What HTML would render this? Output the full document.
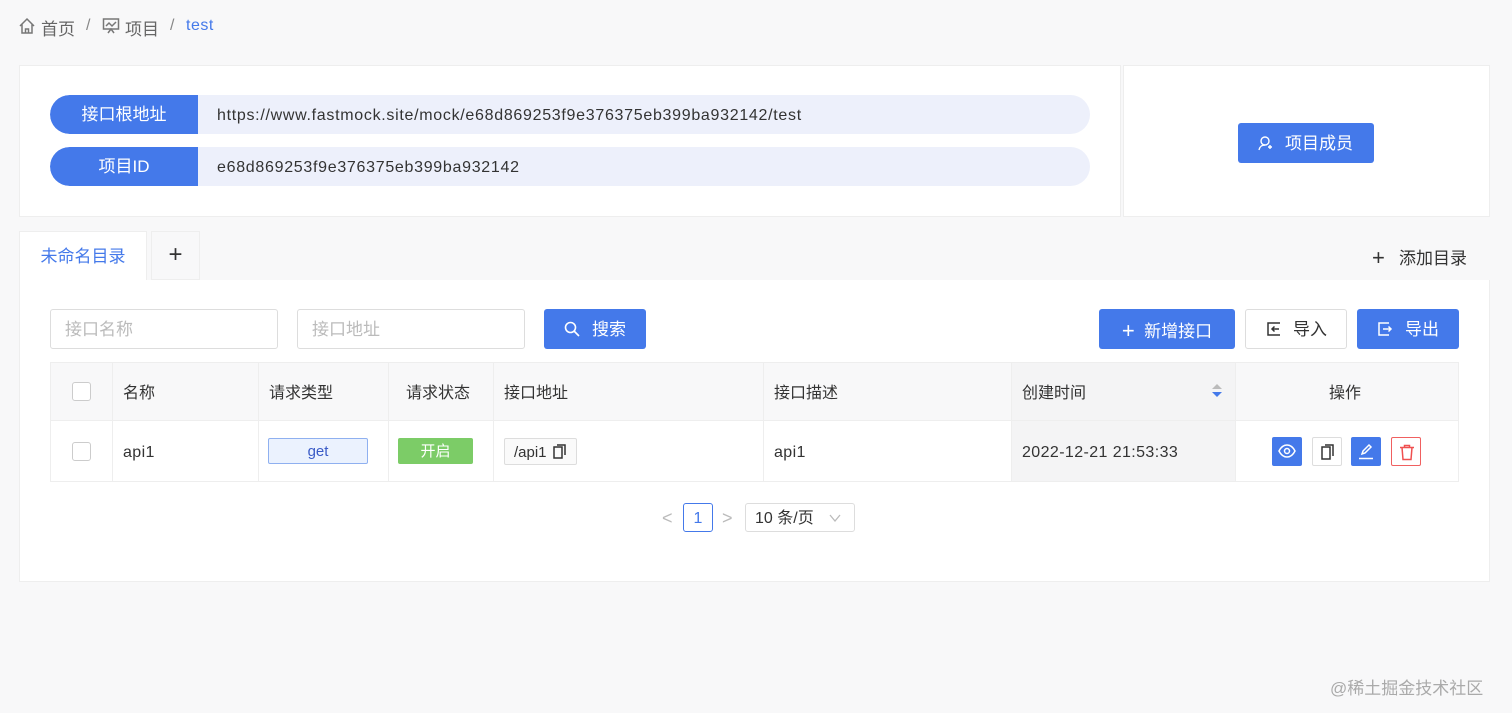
<!DOCTYPE html>
<html><head><meta charset="utf-8"><style>
*{box-sizing:border-box;margin:0;padding:0}
body{width:1512px;height:713px;background:#f8f8f9;font-family:"Liberation Sans","Noto Sans CJK SC",sans-serif;color:#333;position:relative;overflow:hidden;font-size:16px}
.a{position:absolute}
.card{background:#fff;border:1px solid #eee}
.pill{position:absolute;left:50px;width:1040px;height:39px;border-radius:20px;background:#edf0fb;overflow:hidden}
.pill .l{position:absolute;left:0;top:0;width:148px;height:39px;background:#4479ea;color:#fff;text-align:center;line-height:39px;font-size:17px;border-radius:20px 0 0 20px}
.pill .v{position:absolute;left:217px;top:1px;line-height:39px;font-size:16px;color:#333;letter-spacing:.7px}
.btn{position:absolute;height:40px;border-radius:3px;line-height:40px;text-align:center;font-size:17px}
.bl{background:#4479ea;color:#fff}
.wh{background:#fff;border:1px solid #ddd;color:#333;line-height:38px}
.inp{position:absolute;top:309px;height:40px;width:228px;border:1px solid #ddd;border-radius:3px;background:#fff;color:#bbb;font-size:17px;line-height:40px;padding-left:14px}
.th{position:absolute;top:364px;height:59px;line-height:59px;font-size:16px;color:#333}
.td{position:absolute;top:423px;height:60px;line-height:60px;font-size:16px;color:#333;letter-spacing:.4px}
.vl{position:absolute;width:1px;background:#eee}
.cb{position:absolute;left:72px;width:19px;height:19px;border:1px solid #ccc;border-radius:3px;background:#fff}
.ib{position:absolute;top:437px;width:30px;height:29px;border-radius:2px}
</style></head><body>
<svg class="a" style="left:18px;top:17px" width="18" height="18" viewBox="0 0 18 18" fill="none" stroke="#777" stroke-width="1.5"><path d="M2 9L9 2l7 7M4 7.5V16h10V7.5M7.5 16v-4h3v4"/></svg>
<div class="a" style="left:41px;top:15px;font-size:17px;color:#666">首页</div>
<div class="a" style="left:86px;top:17px;font-size:16px;color:#888">/</div>
<svg class="a" style="left:102px;top:17px" width="18" height="18" viewBox="0 0 18 18" fill="none" stroke="#777" stroke-width="1.5"><rect x="1.5" y="2" width="15" height="10"/><path d="M4 9l3-3 3 3 4-4M6 16l3-4 3 4"/></svg>
<div class="a" style="left:125px;top:15px;font-size:17px;color:#666">项目</div>
<div class="a" style="left:170px;top:17px;font-size:16px;color:#888">/</div>
<div class="a" style="left:186px;top:17px;font-size:16px;color:#4479ea;letter-spacing:.5px">test</div>

<div class="a card" style="left:19px;top:65px;width:1102px;height:152px"></div>
<div class="a card" style="left:1123px;top:65px;width:367px;height:152px"></div>
<div class="pill" style="top:95px"><div class="l">接口根地址</div><div class="v" style="left:167px">https://www.fastmock.site/mock/e68d869253f9e376375eb399ba932142/test</div></div>
<div class="pill" style="top:147px"><div class="l">项目ID</div><div class="v" style="left:167px">e68d869253f9e376375eb399ba932142</div></div>
<div class="btn bl" style="left:1238px;top:123px;width:136px;line-height:41px">
<svg style="position:absolute;left:19px;top:12px" width="17" height="17" viewBox="0 0 17 17" fill="none" stroke="#fff" stroke-width="1.4"><circle cx="8" cy="6" r="4"/><path d="M2 15c1-4 3-5 6-5M11 12h4M13 10v4"/></svg>
<span style="margin-left:26px">项目成员</span></div>

<div class="a" style="left:19px;top:231px;width:128px;height:51px;background:#fff;border:1px solid #eee;border-bottom:none;color:#4479ea;font-size:17px;line-height:49px;text-align:center">未命名目录</div>
<div class="a" style="left:151px;top:231px;width:49px;height:49px;background:#f8f8f9;border:1px solid #eee;font-size:24px;line-height:46px;text-align:center;color:#333">+</div>
<div class="a" style="left:1372px;top:244px;font-size:17px;color:#333"><span style="font-size:22px;position:relative;top:1px">+</span>&nbsp;&nbsp; 添加目录</div>

<div class="a" style="left:19px;top:280px;width:1471px;height:302px;background:#fff;border:1px solid #eee;border-top:none"></div>
<div class="inp" style="left:50px">接口名称</div>
<div class="inp" style="left:297px">接口地址</div>
<div class="btn bl" style="left:544px;top:309px;width:102px;line-height:42px">
<svg style="position:absolute;left:20px;top:12px" width="16" height="16" viewBox="0 0 16 16" fill="none" stroke="#fff" stroke-width="1.6"><circle cx="6.5" cy="6.5" r="5"/><path d="M10 10l5 5"/></svg><span style="margin-left:28px">搜索</span></div>
<div class="btn bl" style="left:1099px;top:309px;width:136px;line-height:42px"><span style="font-size:22px;position:relative;top:1px">+</span>&nbsp; 新增接口</div>
<div class="btn wh" style="left:1245px;top:309px;width:102px;line-height:40px">
<svg style="position:absolute;left:20px;top:11px" width="16" height="16" viewBox="0 0 16 16" fill="none" stroke="#333" stroke-width="1.5"><path d="M14 2H2v12h12M6 8h7M8.5 5.5L6 8l2.5 2.5"/></svg><span style="margin-left:28px">导入</span></div>
<div class="btn bl" style="left:1357px;top:309px;width:102px;line-height:42px">
<svg style="position:absolute;left:20px;top:12px" width="16" height="16" viewBox="0 0 16 16" fill="none" stroke="#fff" stroke-width="1.5"><path d="M12 2H2v12h10M6 8h8M11.5 5.5L14 8l-2.5 2.5"/></svg><span style="margin-left:28px">导出</span></div>

<div class="a" style="left:50px;top:362px;width:1409px;height:120px;border:1px solid #eee;background:#fff"></div>
<div class="a" style="left:51px;top:363px;width:1407px;height:58px;background:#f8f8f9"></div>
<div class="a" style="left:1011px;top:363px;width:224px;height:118px;background:#f4f4f5"></div>
<div class="a" style="left:51px;top:420px;width:1407px;height:1px;background:#eee"></div>
<div class="vl" style="left:112px;top:363px;height:118px"></div>
<div class="vl" style="left:258px;top:363px;height:118px"></div>
<div class="vl" style="left:388px;top:363px;height:118px"></div>
<div class="vl" style="left:493px;top:363px;height:118px"></div>
<div class="vl" style="left:763px;top:363px;height:118px"></div>
<div class="vl" style="left:1011px;top:363px;height:118px"></div>
<div class="vl" style="left:1235px;top:363px;height:118px"></div>
<div class="cb" style="top:382px"></div>
<div class="cb" style="top:442px"></div>
<div class="th" style="left:123px">名称</div>
<div class="th" style="left:269px">请求类型</div>
<div class="th" style="left:406px">请求状态</div>
<div class="th" style="left:504px">接口地址</div>
<div class="th" style="left:774px">接口描述</div>
<div class="th" style="left:1022px">创建时间</div>
<div class="a" style="left:1212px;top:384px;width:0;height:0;border:5px solid transparent;border-bottom:5px solid #bbb;border-top:none"></div>
<div class="a" style="left:1212px;top:392px;width:0;height:0;border:5px solid transparent;border-top:5px solid #4479ea;border-bottom:none"></div>
<div class="th" style="left:1329px">操作</div>
<div class="td" style="left:123px">api1</div>
<div class="a" style="left:268px;top:438px;width:100px;height:26px;border:1px solid #8fb0f0;background:#ebf2fe;border-radius:2px;color:#3a5bc7;text-align:center;line-height:26px;font-size:15px">get</div>
<div class="a" style="left:398px;top:438px;width:75px;height:26px;background:#7ccc67;border-radius:2px;color:#fff;text-align:center;line-height:27px;font-size:15px">开启</div>
<div class="a" style="left:504px;top:438px;width:73px;height:27px;border:1px solid #ddd;border-radius:2px;background:#fafafa;font-size:15px;line-height:27px;padding-left:9px;color:#333">/api1
<svg style="position:absolute;left:48px;top:5px" width="13" height="15" viewBox="0 0 13 15" fill="none" stroke="#333" stroke-width="1.5"><rect x="1" y="3" width="8" height="11"/><path d="M4 1h8v10"/></svg></div>
<div class="td" style="left:774px">api1</div>
<div class="td" style="left:1022px">2022-12-21 21:53:33</div>
<div class="ib" style="left:1272px;background:#4479ea"><svg style="position:absolute;left:6px;top:7px" width="18" height="14" viewBox="0 0 18 14" fill="none" stroke="#fff" stroke-width="1.5"><path d="M1 7c2-4 5-6 8-6s6 2 8 6c-2 4-5 6-8 6S3 11 1 7z"/><circle cx="9" cy="7" r="2.5"/></svg></div>
<div class="ib" style="left:1312px;border:1px solid #ddd;background:#fff"><svg style="position:absolute;left:8px;top:6px" width="13" height="16" viewBox="0 0 13 16" fill="none" stroke="#333" stroke-width="1.5"><rect x="1" y="3" width="8" height="12"/><path d="M4 1h8v11"/></svg></div>
<div class="ib" style="left:1351px;background:#4479ea"><svg style="position:absolute;left:7px;top:6px" width="16" height="17" viewBox="0 0 16 17" fill="none" stroke="#fff" stroke-width="1.5"><path d="M4 11l1-3 6-6 2 2-6 6zM1 15.5h14"/></svg></div>
<div class="ib" style="left:1391px;border:1px solid #f06060;background:#fff"><svg style="position:absolute;left:7px;top:6px" width="16" height="17" viewBox="0 0 16 17" fill="none" stroke="#ef5050" stroke-width="1.5"><path d="M1 3.5h14M5.5 3.5V1.5h5v2M3 3.5l1 12h8l1-12"/></svg></div>

<div class="a" style="left:662px;top:508px;color:#bbb;font-size:18px">&lt;</div>
<div class="a" style="left:683px;top:503px;width:30px;height:29px;border:1px solid #4479ea;border-radius:3px;color:#4479ea;text-align:center;line-height:29px;font-size:16px">1</div>
<div class="a" style="left:722px;top:508px;color:#bbb;font-size:18px">&gt;</div>
<div class="a" style="left:745px;top:503px;width:110px;height:29px;border:1px solid #ddd;border-radius:3px;font-size:16px;line-height:29px;padding-left:9px;color:#333">10 条/页
<svg style="position:absolute;left:83px;top:10px" width="12" height="8" viewBox="0 0 12 8" fill="none" stroke="#bbb" stroke-width="1.3"><path d="M1 1l5 6 5-6"/></svg></div>

<div class="a" style="left:1330px;top:674px;font-size:17px;color:#aaa">@稀土掘金技术社区</div>
</body></html>
